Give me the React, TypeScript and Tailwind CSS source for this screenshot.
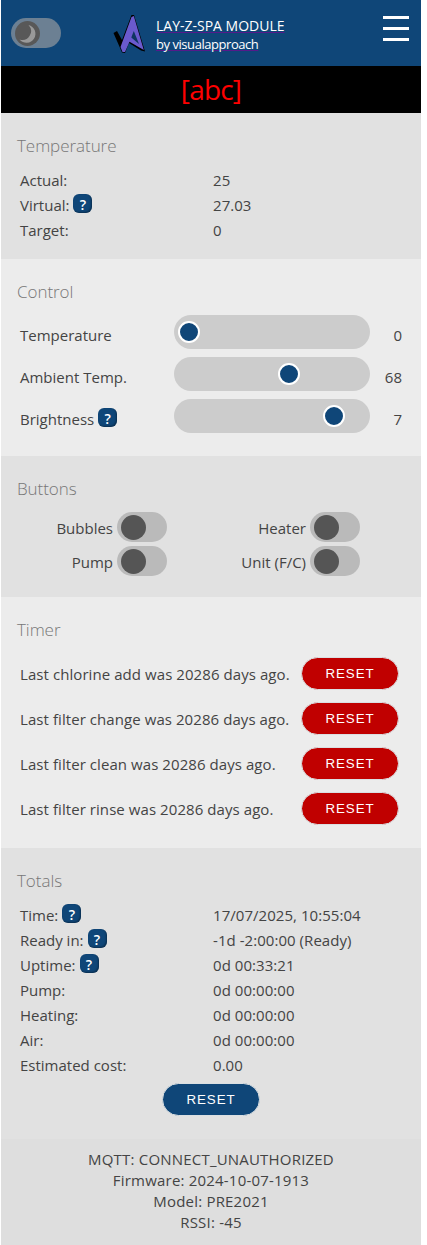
import type { ReactNode } from "react";

function Help() {
  return (
    <span className="ml-1 inline-flex h-[19px] w-[19px] shrink-0 -translate-y-0.5 items-center justify-center rounded-[6px] bg-[#0f4678] pt-[2px] text-[14px] font-semibold text-white shadow-[inset_-1px_-1px_2px_rgba(0,0,0,0.35)]">
      ?
    </span>
  );
}

function Section({
  title,
  className,
  children,
}: {
  title: string;
  className: string;
  children: ReactNode;
}) {
  return (
    <section className={`px-4 ${className}`}>
      <h2 className="h-[55px] pt-[21px] text-[17px] leading-6 font-light tracking-[-0.05px] text-[#777]">
        {title}
      </h2>
      {children}
    </section>
  );
}

function Row({ label, value, help }: { label: string; value: string; help?: boolean }) {
  return (
    <div className="flex h-[25px] items-center pl-[3px]">
      <div className="flex w-[193px] items-center">
        {label}
        {help && <Help />}
      </div>
      <div className="tracking-[0.05px]">{value}</div>
    </div>
  );
}

function Slider({
  label,
  value,
  offset,
  help,
}: {
  label: string;
  value: string;
  offset: number;
  help?: boolean;
}) {
  return (
    <div className="flex h-[42px] items-start pt-px pl-[3px]">
      <div className="flex h-[34px] w-[154px] items-center pt-[7px]">
        {label}
        {help && <Help />}
      </div>
      <div className="flex h-[34px] w-[196px] items-center rounded-full bg-[#ccc]">
        <div
          className="h-[22px] w-[22px] rounded-full border-2 border-white bg-[#0f4678]"
          style={{ marginLeft: offset }}
        />
      </div>
      <div className="flex h-[34px] w-[32px] items-center justify-end pt-[7px]">{value}</div>
    </div>
  );
}

function Toggle({ label }: { label: string }) {
  return (
    <div className="flex h-[30px] items-center justify-end gap-1">
      <span className="pt-[3px]">{label}</span>
      <span className="flex h-[30px] w-[50px] items-center rounded-full bg-[#bababa] pl-1">
        <span className="h-[25px] w-[25px] rounded-full bg-[#555]" />
      </span>
    </div>
  );
}

function ResetButton({ className }: { className: string }) {
  return (
    <button
      className={`h-[33px] w-[98px] shrink-0 rounded-full border border-[#dadfe2] font-['Liberation_Sans'] text-[13.33px] tracking-[0.9px] text-white ${className}`}
    >
      RESET
    </button>
  );
}

const timers = [
  "Last chlorine add was 20286 days ago.",
  "Last filter change was 20286 days ago.",
  "Last filter clean was 20286 days ago.",
  "Last filter rinse was 20286 days ago.",
];

export default function App() {
  return (
    <div className="h-[1245px] w-[427px] overflow-hidden bg-white pl-px font-['Open_Sans','Noto_Sans',sans-serif] text-[15px] leading-[21px] text-[#444]">
      <div className="w-[420px]">
        <header className="flex h-[66px] items-center bg-[#0f4678]">
          <div className="ml-2.5 flex h-[30px] w-[50px] items-center rounded-full bg-[#6c8093] pl-1">
            <svg viewBox="0 0 25 25" className="h-[25px] w-[25px]">
              <circle cx="12.5" cy="12.5" r="12.5" fill="#585858" />
              <path d="M13.5 4A9 9 0 1 1 4.5 18.5A8.8 8.8 0 0 0 13.5 4Z" fill="#999" />
            </svg>
          </div>
          <svg viewBox="0 0 32 39" className="ml-[52px] h-[39px] w-8">
            <path d="M0.5 19L4 17L9 26L18.5 1L21 1L32 37.5L28 36.5L16 29L12 39L9 38.5Z" fill="#000" />
            <path
              d="M18.5 3L20.8 2L30.8 36L16.5 27.8L12 38L9.5 38L7.5 33Z"
              fill="#6a5acd"
            />
            <path d="M20.8 17L18.3 23.5L26 30Z" fill="#0f3560" />
          </svg>
          <div className="ml-[11px] pt-1 leading-[18px] whitespace-nowrap text-white">
            <div className="text-[14px] underline decoration-[#551a8b] decoration-1 underline-offset-1">
              LAY-Z-SPA MODULE
            </div>
            <div className="text-[13px] tracking-[-0.45px] underline decoration-[#551a8b] decoration-1 underline-offset-1">
              by visualapproach
            </div>
          </div>
          <div className="mr-3 mb-[9px] ml-auto flex h-[25px] w-[26px] flex-col justify-between">
            <span className="h-[3px] bg-white" />
            <span className="h-[3px] bg-white" />
            <span className="h-[3px] bg-white" />
          </div>
        </header>
        <div className="flex h-[47px] items-center justify-center bg-black text-[28px] tracking-[-0.8px] text-[#f00]">
          [abc]
        </div>
        <Section title="Temperature" className="h-[146px] bg-[#e1e1e1]">
          <Row label="Actual:" value="25" />
          <Row label="Virtual:" value="27.03" help />
          <Row label="Target:" value="0" />
        </Section>
        <Section title="Control" className="h-[197px] bg-[#ececec]">
          <Slider label="Temperature" value="0" offset={4} />
          <Slider label="Ambient Temp." value="68" offset={104} />
          <Slider label="Brightness" value="7" offset={149} help />
        </Section>
        <Section title="Buttons" className="h-[141px] bg-[#e1e1e1]">
          <div className="grid w-[343px] grid-cols-[150px_193px] gap-y-1 pt-px">
            <Toggle label="Bubbles" />
            <Toggle label="Heater" />
            <Toggle label="Pump" />
            <Toggle label="Unit (F/C)" />
          </div>
        </Section>
        <Section title="Timer" className="h-[251px] bg-[#ececec]">
          {timers.map((text) => (
            <div key={text} className="flex h-[45px] items-center justify-between pr-[6px] pl-[3px]">
              <span className="tracking-[0.07px] whitespace-nowrap">{text}</span>
              <ResetButton className="mb-[2px] bg-[#c00000]" />
            </div>
          ))}
        </Section>
        <Section title="Totals" className="h-[291px] bg-[#e1e1e1]">
          <Row label="Time:" value="17/07/2025, 10:55:04" help />
          <Row label="Ready in:" value="-1d -2:00:00 (Ready)" help />
          <Row label="Uptime:" value="0d 00:33:21" help />
          <Row label="Pump:" value="0d 00:00:00" />
          <Row label="Heating:" value="0d 00:00:00" />
          <Row label="Air:" value="0d 00:00:00" />
          <Row label="Estimated cost:" value="0.00" />
          <div className="flex justify-center pt-[5px]">
            <ResetButton className="bg-[#0f4678]" />
          </div>
        </Section>
        <footer className="h-[106px] bg-[#dedede] pt-[10px] text-center tracking-[0.2px]">
          <div>MQTT: CONNECT_UNAUTHORIZED</div>
          <div>Firmware: 2024-10-07-1913</div>
          <div>Model: PRE2021</div>
          <div>RSSI: -45</div>
        </footer>
      </div>
    </div>
  );
}
